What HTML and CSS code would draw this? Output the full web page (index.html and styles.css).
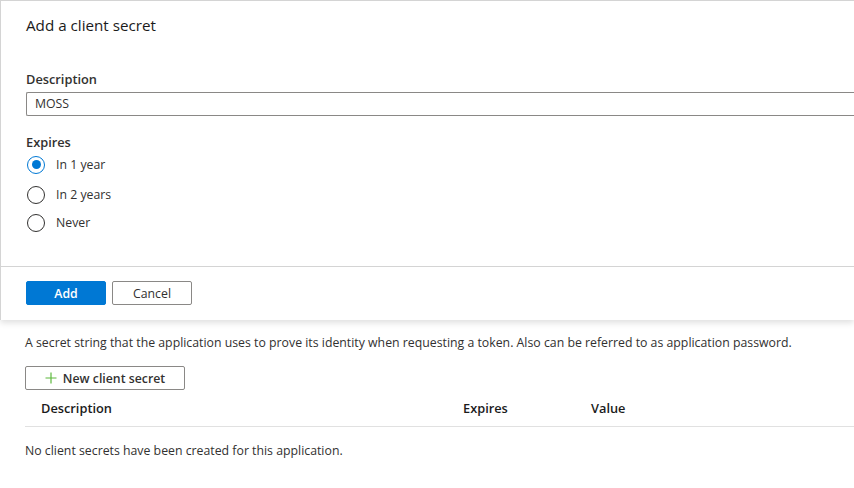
FILE: index.html
```html
<!DOCTYPE html>
<html>
<head>
<meta charset="utf-8">
<link rel="stylesheet" href="styles.css">
</head>
<body>
<div class="panel">
  <div class="panel-body">
    <h1 class="title">Add a client secret</h1>
    <label class="label label-desc">Description</label>
    <div class="input">MOSS</div>
    <label class="label label-exp">Expires</label>
    <div class="radios">
      <div class="radio checked"><span class="dot"></span><span class="rtext">In 1 year</span></div>
      <div class="radio"><span class="dot"></span><span class="rtext">In 2 years</span></div>
      <div class="radio"><span class="dot"></span><span class="rtext">Never</span></div>
    </div>
  </div>
  <div class="panel-foot">
    <button class="btn primary">Add</button>
    <button class="btn">Cancel</button>
  </div>
</div>
<div class="content">
  <p class="intro">A secret string that the application uses to prove its identity when requesting a token. Also can be referred to as application password.</p>
  <button class="btn new"><svg class="plus" width="12" height="12" viewBox="0 0 12 12"><path d="M6 0.5V11.5M0.5 6H11.5" stroke="#5db83c" stroke-width="1.2" fill="none"/></svg>New client secret</button>
  <div class="thead">
    <span class="c1">Description</span>
    <span class="c2">Expires</span>
    <span class="c3">Value</span>
  </div>
  <p class="empty">No client secrets have been created for this application.</p>
</div>
</body>
</html>
```
FILE: styles.css
```css
html, body {
  margin: 0;
  padding: 0;
  background: #fff;
}
body {
  width: 854px;
  height: 488px;
  overflow: hidden;
  font-family: "Segoe UI", "Open Sans", "Noto Sans", sans-serif;
  color: #323130;
  font-size: 12.3px;
}
.panel {
  border-top: 1px solid #d4d4d4;
  border-left: 1px solid #d4d4d4;
  height: 319px;
  box-shadow: 0 3px 6px rgba(0,0,0,0.12);
  position: relative;
  z-index: 1;
  background: #fff;
  display: flex;
  flex-direction: column;
}
.panel-body {
  padding-left: 25px;
  height: 265px;
  border-bottom: 1px solid #d4d4d4;
}
.title {
  margin: 0;
  padding-top: 13px;
  font-size: 15.2px;
  font-weight: 400;
  line-height: 22px;
  color: #1b1b1b;
}
.label {
  display: block;
  font-weight: 600;
  font-size: 12.8px;
  line-height: 18px;
  color: #323130;
}
.label-desc {
  margin-top: 34px;
}
.input {
  margin-top: 4px;
  height: 22px;
  border: 1px solid #8a8886;
  border-right: none;
  border-radius: 2px 0 0 2px;
  padding-left: 8px;
  line-height: 22px;
  font-size: 12.3px;
  color: #323130;
}
.label-exp {
  margin-top: 17px;
}
.radios {
  margin-top: 4px;
  display: flex;
  flex-direction: column;
  gap: 9px;
}
.radio {
  display: flex;
  align-items: center;
  height: 19px;
}
.radio.checked {
  margin-bottom: 2px;
}
.dot {
  width: 16px;
  height: 16px;
  border: 1.5px solid #323130;
  border-radius: 50%;
  position: relative;
  flex: none;
  margin-left: 1px;
}
.radio.checked .dot {
  border-color: #0078d4;
}
.radio.checked .dot::after {
  content: "";
  position: absolute;
  left: 3.5px;
  top: 3.5px;
  width: 9px;
  height: 9px;
  border-radius: 50%;
  background: #0078d4;
}
.rtext {
  margin-left: 11px;
  color: #323130;
}
.panel-foot {
  padding: 14px 0 0 25px;
  display: flex;
  gap: 6px;
}
.btn {
  font-family: inherit;
  font-size: 12.3px;
  height: 24px;
  width: 80px;
  border: 1px solid #8a8886;
  background: #fff;
  color: #323130;
  border-radius: 2px;
  padding: 0;
  display: flex;
  align-items: center;
  justify-content: center;
}
.btn.primary {
  background: #0078d4;
  border-color: #0078d4;
  color: #fff;
  font-weight: 600;
}
.content {
  padding: 14px 0 0 25px;
}
.intro {
  margin: 0;
  line-height: 18px;
}
.btn.new {
  margin-top: 14px;
  width: 160px;
  gap: 6px;
  font-weight: 600;
  color: #323130;
}
.plus {
  flex: none;
}
.thead {
  display: flex;
  height: 36px;
  align-items: center;
  border-bottom: 1px solid #e1e1e1;
  font-weight: 600;
  font-size: 12.8px;
  color: #1b1b1b;
}
.c1 { margin-left: 16px; width: 422px; }
.c2 { width: 128px; }
.c3 { }
.empty {
  margin: 15px 0 0;
  line-height: 18px;
}
```
